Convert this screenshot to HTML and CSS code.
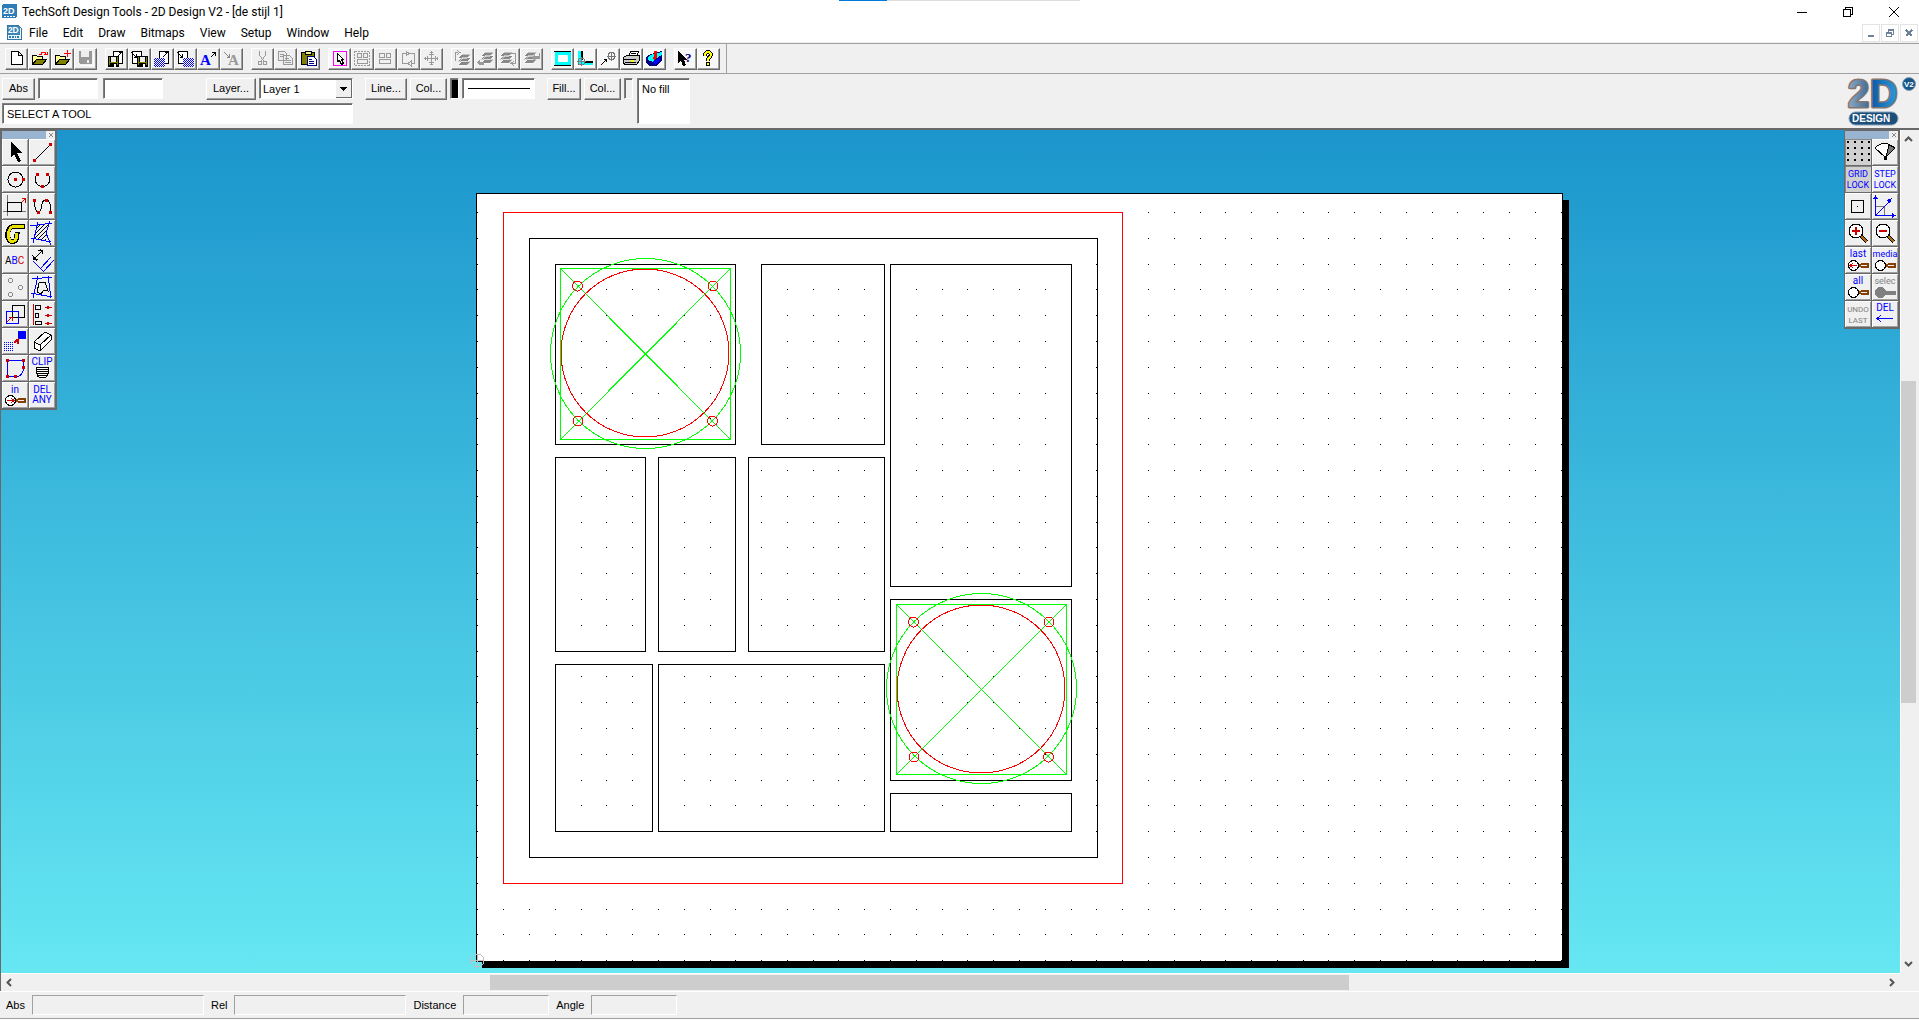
FILE: index.html
```html
<!DOCTYPE html>
<html lang="en">
<head>
<meta charset="utf-8">
<title>TechSoft Design Tools - 2D Design V2 - [de stijl 1]</title>
<link rel="stylesheet" href="styles.css">
</head>
<body>
<svg class="defs" aria-hidden="true">
  <defs>
    <pattern id="dither" width="2" height="2" patternUnits="userSpaceOnUse"><rect width="2" height="2" fill="#fff"/><path d="M0 0h1v1H0zM1 1h1v1H1z" fill="#00f"/></pattern>
    <pattern id="dotfill" width="2" height="2" patternUnits="userSpaceOnUse"><path d="M0 0h1v1H0z" fill="#00f"/></pattern>
    <pattern id="hatch" width="4" height="4" patternUnits="userSpaceOnUse"><path d="M-1 5 5-1M-1 1 1-1M3 5 5 3" stroke="#000" fill="none"/></pattern>
    <linearGradient id="steel" x1="0" x2="1"><stop offset="0" stop-color="#8fa9c0"/><stop offset="1" stop-color="#3f6c96"/></linearGradient>
    <linearGradient id="azure" x1="0" x2="1"><stop offset="0" stop-color="#0a58a0"/><stop offset="1" stop-color="#2a9ae0"/></linearGradient>
    <symbol id="disk" viewBox="0 0 12 12"><path d="M0 0h12v12H1L0 11z" fill="#000"/><path d="M1 1h1v9H1zM10 1h1v9h-1zM2 7h8v1H2z" fill="#808000"/><path d="M3 1h6v5H3z" fill="#efefef"/><path d="M7 9h2v3H7z" fill="#fff"/></symbol>
    <symbol id="lens" viewBox="0 0 26 26"><circle cx="8.500" cy="18.500" r="5" fill="#fff" stroke="#000"/><path d="M14 17h2v-1h7l1 1v3l-1 1h-7v-1h-2z" fill="#843f00"/><path d="M16 18h6" stroke="#efefef"/></symbol>
    <symbol id="glass" viewBox="0 0 26 26"><path d="M16 16l6 6" stroke="#000" stroke-width="4"/><path d="M16 16l6 6" stroke="#b06a10" stroke-width="2"/><circle cx="11" cy="11" r="7" fill="#fff" stroke="#000"/></symbol>
    <symbol id="stack" viewBox="0 0 14 14"><path d="M5 1h9l-4 4H1zM5 4.500h9l-4 4H1zM5 8h9l-4 4H1z" fill="#888" stroke="#fff" stroke-width=".5"/></symbol>
  </defs>
</svg>

<div class="app">
  <header class="titlebar">
    <svg class="appicon" viewBox="0 0 16 16"><rect width="15" height="14" rx="2" fill="#2c7cb8"/><text x="1" y="10" class="mini">2D</text><path d="M2 12h11" stroke="#fff" stroke-dasharray="2 1"/></svg>
    <h1>TechSoft Design Tools - 2D Design V2 - [de stijl 1]</h1>
    <div class="wincontrols">
      <button aria-label="Minimise"><svg viewBox="0 0 12 12"><path d="M1 6.500h10" stroke="#000"/></svg></button>
      <button aria-label="Restore"><svg viewBox="0 0 12 12"><path d="M1.500 3.500h7v7h-7zM3.500 3V1.500h7v7H9" fill="none" stroke="#000"/></svg></button>
      <button aria-label="Close"><svg class="soft" viewBox="0 0 12 12"><path d="M1 1l10 10M11 1 1 11" stroke="#000"/></svg></button>
    </div>
    <div class="hint"></div>
  </header>
  <nav class="menubar">
    <svg class="docicon" viewBox="0 0 16 16"><path d="M.5.5h12l3 3v12H.5z" fill="#e8f4fb" stroke="#2c6c98"/><path d="M1 1h13v10H1z" fill="#3a86b8"/><text x="1" y="9" class="mini">2D</text><path d="M2 13h12" stroke="#2c7cb8" stroke-width="2" stroke-dasharray="2 1"/></svg>
    <a href="#">File</a><a href="#">Edit</a><a href="#">Draw</a><a href="#">Bitmaps</a><a href="#">View</a><a href="#">Setup</a><a href="#">Window</a><a href="#">Help</a>
    <div class="mdicontrols">
      <button aria-label="Minimise drawing"><svg viewBox="0 0 10 10"><path d="M2 7.500h6" stroke="#6d8299" stroke-width="2"/></svg></button>
      <button aria-label="Restore drawing"><svg viewBox="0 0 10 10"><path d="M1.500 5h5v3.500h-5zM3.500 4V2h5v4H7" fill="none" stroke="#6d8299"/><path d="M1 4.500h6M3 1.500h6" stroke="#6d8299" stroke-width="2"/></svg></button>
      <button aria-label="Close drawing"><svg viewBox="0 0 10 10"><path d="M2 2l6 6M8 2 2 8" stroke="#6d8299" stroke-width="2"/></svg></button>
    </div>
  </nav>

  <div class="toolbar">
    <div class="icons">
      <div class="group">
        <button aria-label="New"><svg viewBox="0 0 23 22"><path d="M6.500 3.500h7l4 4v9h-11zM13.500 3.500v4h4" fill="#fff" stroke="#000"/></svg></button>
        <button aria-label="Open"><svg viewBox="0 0 23 22"><path d="M4.500 16.500v-9h4l1 1h5v3" fill="#ff9" stroke="#000"/><path d="M4.500 16.500l4-5h10l-4 5z" fill="#808000" stroke="#000"/><path d="M11 6.500h2v-2h4v2h2M16 6.500h3v-3" fill="none" stroke="red"/></svg></button>
        <button aria-label="Insert"><svg viewBox="0 0 23 22"><path d="M4.500 16.500v-9h4l1 1h5v3" fill="#ff9" stroke="#000"/><path d="M4.500 16.500l4-5h10l-4 5z" fill="#808000" stroke="#000"/><path d="M13 5.500h7M16.500 2v7" stroke="red"/></svg></button>
        <button aria-label="Save"><svg viewBox="0 0 23 22"><path d="M5 3h13v13H6l-1-1z" fill="#999"/><path d="M7 3h8v6H7zM13 12h2v3h-2z" fill="#eee"/><path d="M6 17.500h13V5" fill="none" stroke="#fff"/></svg></button>
      </div>
      <div class="group">
        <button aria-label="Export drawing"><svg viewBox="0 0 23 22"><path d="M8.500 3.500h9v12h-9z" fill="#fff" stroke="#000"/><use href="#disk" x="3" y="8" width="11" height="11"/><path d="M13 8l4-4M14 4.500h3v3" fill="none" stroke="#000"/></svg></button>
        <button aria-label="Import drawing"><svg viewBox="0 0 23 22"><path d="M4.500 3.500h9v12h-9z" fill="#fff" stroke="#000"/><use href="#disk" x="9" y="8" width="11" height="11"/><path d="M3 4l5 5M8.500 6v3.500h-3" fill="none" stroke="#000"/></svg></button>
        <button aria-label="Export bitmap"><svg viewBox="0 0 23 22"><path d="M8.500 3.500h9v12h-9z" fill="#fff" stroke="#000"/><path d="M3 10h11v9H3z" fill="url(#dither)"/><path d="M12 9l5-5M14 4.500h3v3" fill="none" stroke="#000"/></svg></button>
        <button aria-label="Import bitmap"><svg viewBox="0 0 23 22"><path d="M4.500 3.500h9v12h-9z" fill="#fff" stroke="#000"/><path d="M9 10h11v9H9z" fill="url(#dither)"/><path d="M3 4l5 5M8.500 6v3.500h-3" fill="none" stroke="#000"/></svg></button>
        <button aria-label="Export text"><svg viewBox="0 0 23 22"><text x="3" y="17" class="serifA">A</text><path d="M14 9l4-4M15 4.500h3v3" fill="none" stroke="#000"/></svg></button>
        <button aria-label="Import text"><svg viewBox="0 0 23 22"><text x="8" y="17" class="serifA off">A</text><path d="M4 4l5 5M9.500 6v3.500h-3" fill="none" stroke="#888"/></svg></button>
      </div>
      <div class="group">
        <button aria-label="Cut"><svg viewBox="0 0 23 22"><path d="M8.500 3v4l4 6M14.500 3v4l-4 6" fill="none" stroke="#999"/><circle cx="9" cy="15" r="2" fill="none" stroke="#999"/><circle cx="14" cy="15" r="2" fill="none" stroke="#999"/></svg></button>
        <button aria-label="Copy"><svg viewBox="0 0 23 22"><path d="M4.500 3.500h6l2 2v7h-8zM9.500 7.500h6l3 3v6h-9z" fill="#eee" stroke="#999"/><path d="M6 6.500h4M6 8.500h3M11 10.500h4M11 12.500h6M11 14.500h6" stroke="#999"/></svg></button>
        <button aria-label="Paste"><svg viewBox="0 0 23 22"><path d="M4.500 4.500h13v12h-13z" fill="#808000" stroke="#000"/><path d="M8 3h6v3H8z" fill="#ee9" stroke="#000"/><path d="M10.500 8.500h6l3 3v6h-9z" fill="#fff" stroke="#000080"/><path d="M12 11.500h3M12 13.500h5M12 15.500h5" stroke="#000080"/></svg></button>
      </div>
      <div class="group">
        <button class="lit" aria-label="Select"><svg viewBox="0 0 23 22"><path d="M5 3.500h13v14H5z" fill="#efefef" stroke="#f0f"/><path d="M9.500 5.500v8l2-1 2 4 2-1-2-4h2z" fill="#fff" stroke="#000"/></svg></button>
        <button aria-label="Select all"><svg viewBox="0 0 23 22"><path d="M3.500 3.500h15v14h-15z" fill="none" stroke="#999" stroke-dasharray="2 1"/><path d="M6.500 5.500h4v4h-4zM12.500 5.500h4v4h-4zM6.500 11.500h10v4h-10z" fill="none" stroke="#999"/></svg></button>
        <button aria-label="Group"><svg viewBox="0 0 23 22"><path d="M5.500 5.500h5v4h-5zM12.500 5.500h4v4h-4zM5.500 11.500h11v4h-11z" fill="none" stroke="#999"/></svg></button>
        <button aria-label="Rotate"><svg viewBox="0 0 23 22"><path d="M10 5.500H5.500v10H11M12 5.500h5.500v10H14M9 3v5l3-2.500zM14 13v5l-3-2.500z" fill="none" stroke="#999"/></svg></button>
        <button aria-label="Move"><svg viewBox="0 0 23 22"><path d="M4 10.500h14M11.500 3v14M9 6.500h5M9 14.500h5M7.500 8v5M15.500 8v5M5.500 9v3M17.500 9v3M10 4.500h3M10 16.500h3" stroke="#999"/></svg></button>
      </div>
      <div class="group">
        <button aria-label="Bring to front"><svg viewBox="0 0 23 22"><use href="#stack" x="6" y="5" width="14" height="14"/><path d="M4.500 13V4.500H7M6 2.500l3 2-3 2" fill="none" stroke="#999"/></svg></button>
        <button aria-label="Bring forward"><svg viewBox="0 0 23 22"><use href="#stack" x="6" y="3" width="14" height="14"/><path d="M3 15l3-4v3h4v3H6z" fill="#999"/></svg></button>
        <button aria-label="Send to back"><svg viewBox="0 0 23 22"><use href="#stack" x="2" y="3" width="14" height="14"/><path d="M14 5.500h4.500v10H15M17 13l-3 2.500 3 2" fill="none" stroke="#999"/></svg></button>
        <button aria-label="Send backward"><svg viewBox="0 0 23 22"><use href="#stack" x="3" y="3" width="14" height="14"/><path d="M12 9l3-3v2h4V5h1v6h-5v2z" fill="#999"/></svg></button>
      </div>
      <div class="group">
        <button class="lit" aria-label="Page view"><svg viewBox="0 0 23 22"><path d="M5 5.500h13v10H5z" fill="#fff" stroke="#0ff" stroke-width="3"/><path d="M3 3.500h17M3 17.500h17" stroke="#000"/></svg></button>
        <button class="lit" aria-label="Rulers"><svg viewBox="0 0 23 22"><path d="M4 3h4v14H4zM8 13h11v4H8z" fill="#0ff"/><path d="M7.500 3v9M10 13.500h9" stroke="#000" stroke-width="2"/><circle cx="7.500" cy="13.500" r="3.500" fill="none" stroke="#777"/><path d="M3 13.500h9M7.500 9v9" stroke="#777"/></svg></button>
        <button class="lit" aria-label="Origin"><svg viewBox="0 0 23 22"><circle cx="14.500" cy="8" r="3.500" fill="none" stroke="#777"/><path d="M10 8h9M14.500 3.500v9" stroke="#777"/><path d="M4 17l5-5" stroke="#000"/><path d="M6 11h4v4z"/></svg></button>
        <button class="lit" aria-label="Print"><svg viewBox="0 0 23 22"><path d="M8.500 8.500l2-5h8l-2 5z" fill="#fff" stroke="#000"/><path d="M3.500 9.500l3-2h13v5l-3 4H4.500l-1-2z" fill="#ccc" stroke="#000"/><path d="M4 11.500h12M5 14.500h11M11 5.500h5M10 7.500h5" stroke="#000"/><path d="M11 12h3v2h-3z" fill="#ff0"/></svg></button>
        <button class="lit" aria-label="Machine output"><svg viewBox="0 0 23 22"><path d="M3 9l5-3 11-3v9l-5 6H6l-3-3z" fill="#000080"/><path d="M5 9l5-3 9-2v3l-7 4-2 3-5-2z" fill="#0ff"/><path d="M11 3h3v6l-3 3-2-2 2-2z" fill="red"/><path d="M9 14l8-4v3l-5 4z" fill="#00f"/></svg></button>
      </div>
      <div class="group">
        <button class="lit" aria-label="Context help"><svg viewBox="0 0 23 22"><path d="M4 3v12l3-2 2 5 3-1-2-5h3z"/><text x="11" y="14" class="q">?</text></svg></button>
        <button class="lit" aria-label="Help"><svg viewBox="0 0 23 22"><path d="M8 8V6q3-4 6 0 0 2-2 4-1 0-1 2.500" fill="none" stroke="#000" stroke-width="4"/><path d="M8 8V6q3-4 6 0 0 2-2 4-1 0-1 2.500" fill="none" stroke="#ff0" stroke-width="2"/><path d="M9.500 14.500h3v3h-3z" fill="#ff0" stroke="#000"/></svg></button>
      </div>
    </div>
  </div>

  <div class="options">
    <div class="coords">
      <div class="row">
        <button class="push abs">Abs</button>
        <input class="sunk num" aria-label="X coordinate"><input class="sunk num" aria-label="Y coordinate">
        <button class="push layer">Layer...</button>
        <select class="sunk" aria-label="Layer"><option>Layer 1</option></select>
      </div>
      <input class="sunk prompt" aria-label="Prompt" value="SELECT A TOOL" readonly>
    </div>
    <div class="row line">
      <button class="push w42">Line...</button><button class="push">Col...</button>
      <span class="sunk swatch black"></span><span class="sunk sample"></span>
    </div>
    <div class="row fill">
      <button class="push w34">Fill...</button><button class="push">Col...</button>
      <span class="sunk swatch"></span><span class="sunk nofill">No fill</span>
    </div>
    <svg class="logo" viewBox="0 0 72 52" aria-label="2D Design V2">
      <g font-family="Liberation Sans, sans-serif" font-weight="bold">
        <g font-size="38" stroke="#86746e" stroke-width="3" paint-order="stroke" stroke-linejoin="round"><text x="2" y="31" fill="url(#steel)">2</text><text x="24" y="31" fill="url(#azure)">D</text></g>
        <rect x="3" y="36" width="49" height="13" rx="6.500" fill="#1d4f7c" stroke="#8aa0b4"/>
        <text x="6" y="46" font-size="10" fill="#fff">DESIGN</text>
        <circle cx="63" cy="8" r="6.500" fill="#14558a" stroke="#8aa0b4"/><text x="58" y="11" font-size="8" fill="#fff">V2</text>
      </g>
    </svg>
  </div>

  <main class="workspace">
    <div class="canvas">
      <svg class="sheet" width="1094" height="776" viewBox="476 193 1094 776">
        <path d="M482 200h1087v768H482z"/>
        <path d="M476.500 193.500h1086v768h-1086z" fill="#fff" stroke="#000"/>
        <path id="dots"/>
        <g fill="none">
          <path stroke="#f00" d="M503.500 212.500h619v671h-619z"/>
          <path stroke="#000" d="M529.500 238.500h568v619h-568zM555.500 264.500h180v180h-180zM761.500 264.500h123v180h-123zM890.500 264.500h181v322h-181zM555.500 457.500h90v194h-90zM658.500 457.500h77v194h-77zM748.500 457.500h136v194h-136zM555.500 664.500h97v167h-97zM658.500 664.500h226v167h-226zM890.500 599.500h181v181h-181zM890.500 793.500h181v38h-181z"/>
          <g stroke="#0f0"><path d="M560.500 268.500h170v171h-170zM560.500 268.500l170 171M730.500 268.500l-170 171"/><circle cx="645.500" cy="353.500" r="95"/><path d="M896.500 604.500h170v170h-170zM896.500 604.500l170 170M1066.500 604.500l-170 170"/><circle cx="981.500" cy="688.500" r="95"/></g>
          <g stroke="#f00"><circle cx="645" cy="353" r="84"/><circle cx="577.500" cy="286" r="5"/><circle cx="713" cy="286" r="5"/><circle cx="578" cy="421" r="5"/><circle cx="712.500" cy="421" r="5"/>
          <circle cx="981" cy="689" r="84"/><circle cx="913.500" cy="622" r="5"/><circle cx="1049" cy="622" r="5"/><circle cx="914" cy="757" r="5"/><circle cx="1048.500" cy="757" r="5"/></g>
          <g stroke="#c0c0c0"><circle cx="477.500" cy="960.500" r="6.500"/><path d="M471 960.500h13M477.500 954v13"/></g>
        </g>
      </svg>

      <section class="palette left" aria-label="Drawing tools">
        <div class="grip"><button aria-label="Close tools"><svg viewBox="0 0 8 8"><path d="M1 1l6 6M7 1 1 7" stroke="#666"/></svg></button></div>
        <div class="tools">
          <button aria-label="Select"><svg viewBox="0 0 26 26"><path d="M9 3v15l3-3 4 8 3-1-4-8h5z"/></svg></button>
          <button aria-label="Line"><svg viewBox="0 0 26 26"><path d="M6 21 21 6" stroke="#000"/><path d="M4 20h3v3H4zM20 4h3v3h-3z" fill="#c00"/></svg></button>
          <button aria-label="Circle"><svg viewBox="0 0 26 26"><circle cx="13.500" cy="13.500" r="7.500" fill="none" stroke="#000"/><path d="M12 12h3v3h-3zM20 12h3v3h-3z" fill="#c00"/></svg></button>
          <button aria-label="Arc"><svg viewBox="0 0 26 26"><path d="M9 8a7 7 0 0 0-3 5 7.500 7.500 0 0 0 15 0 7 7 0 0 0-3-5" fill="none" stroke="#000"/><path d="M7 7h3v3H7zM17 7h3v3h-3zM12 19h3v3h-3z" fill="#c00"/></svg></button>
          <button aria-label="Rectangle"><svg viewBox="0 0 26 26"><path d="M5.500 2v21M1 18.500h23" stroke="#777"/><path d="M5.500 9.500h14v9h-14z" fill="none" stroke="#000" stroke-width="1"/><path d="M20 9l3-3M19.500 5.500h4v4" fill="none" stroke="#c00"/></svg></button>
          <button aria-label="Curve"><svg viewBox="0 0 26 26"><path d="M5.500 8c0 8 1 11 4 11 5 0 1-12 7-12 5 0 5 6 5 12" fill="none" stroke="#000"/><path d="M4 6h3v3H4zM8 18h3v3H8zM16 6h3v3h-3zM20 18h3v3h-3z" fill="#c00"/></svg></button>
          <button aria-label="Thick line"><svg viewBox="0 0 26 26"><path d="M23 6.500H12c-8 0-8 15-2 15 6 0 5-6 5-10" fill="none" stroke="#000" stroke-width="5"/><path d="M22 6.500H12c-7 0-7 15-2 15 5 0 5-6 5-9" fill="none" stroke="#e8e000" stroke-width="3"/></svg></button>
          <button aria-label="Hatch"><svg viewBox="0 0 26 26"><path d="M8 5l12-1-3 17-11-2z" fill="url(#hatch)"/><path d="M1 6l22-3M9 2 4 23M21 1l-4 12 5 12M2 18l20 4" fill="none" stroke="#00f"/></svg></button>
          <button aria-label="Text"><svg viewBox="0 0 26 26"><text x="3" y="17" class="t10" fill="#000"><tspan fill="#000">A</tspan><tspan fill="#00f">B</tspan><tspan fill="#c00">C</tspan></text></svg></button>
          <button aria-label="Dimension"><svg viewBox="0 0 26 26"><path d="M5 12l9-9M3 8l5 6M11 2l3 3M4.500 12.500v-4M5 12.500h4M13.500 3v4M13 3.500H9" stroke="#000" fill="none"/><path d="M11 22 22 10M14 25 25 13M4 14l11 11" fill="none" stroke="#00f"/></svg></button>
          <button aria-label="Points"><svg viewBox="0 0 26 26"><g fill="none" stroke="#888"><circle cx="8.500" cy="6.500" r="2"/><circle cx="18.500" cy="13.500" r="2"/><circle cx="8.500" cy="20.500" r="2"/></g></svg></button>
          <button aria-label="Offset"><svg viewBox="0 0 26 26"><path d="M3 5l20-2M9 2 4 24M19 2l3 22M2 19l21 4" stroke="#00f" fill="none"/><path d="M10 9l6-1 3 9-4-1-3 4-4-2z" fill="none" stroke="#000"/></svg></button>
          <button aria-label="Scale"><svg viewBox="0 0 26 26"><path d="M10.500 4.500h12v12h-12z" fill="none" stroke="#000"/><path d="M4.500 10.500h12v12h-12z" fill="none" stroke="#00f"/><path d="M5 21l5-5M7 16.500h3.500V20" fill="none" stroke="#c00"/></svg></button>
          <button aria-label="Align"><svg viewBox="0 0 26 26"><path d="M4.500 3v21" stroke="#c00"/><path d="M6.500 4.500h5v4h-5zM6.500 12.500h3v4h-3zM6.500 20.500h6v3h-6z" fill="none" stroke="#000"/><path d="M17 6.500h6M17 14.500h6M17 22.500h6" stroke="#c00"/><path d="M16 6.500l4-2v4zM16 14.500l4-2v4zM16 22.500l4-2v4z" fill="#c00"/></svg></button>
          <button aria-label="Transform"><svg viewBox="0 0 26 26"><path d="M16 3h8v8h-8z" fill="#00f"/><path d="M2 14h10v10H2z" fill="url(#dotfill)"/><path d="M12 14l4-3v4h-1v-2l-2 2z" fill="#c00" stroke="#c00"/></svg></button>
          <button aria-label="3D"><svg viewBox="0 0 26 26"><path d="M5 14 16 4l6 3v5L11 23l-6-3zM5 14l6 3 11-10M11 17v6" fill="#fff" stroke="#000"/></svg></button>
          <button aria-label="Edit path"><svg viewBox="0 0 26 26"><path d="M5.500 5.500h16v7c0 6-3 9-8 9h-8z" fill="none" stroke="#00f"/><path d="M4 4h3v3H4zM20 4h3v3h-3zM20 11h3v3h-3zM12 20h3v3h-3zM4 20h3v3H4z" fill="#c00"/></svg></button>
          <button aria-label="Clip"><svg viewBox="0 0 26 26"><text x="13" y="10" class="t10">CLIP</text><path d="M7.500 12.500h12v6l-3 4h-5c-4 0-4-5-4-10z" fill="#fff" stroke="#000"/><path d="M8 14.500h12M8 16.500h12M8 18.500h11M9 20.500h9" stroke="#000"/></svg></button>
          <button aria-label="Zoom in"><svg viewBox="0 0 26 26"><text x="13" y="11" class="t10">in</text><use href="#lens"/><path d="M5 18.500h7M9 16l3 2.500-3 2.500" fill="none" stroke="#c00"/></svg></button>
          <button aria-label="Delete any"><svg viewBox="0 0 26 26"><text x="13" y="11" class="t10">DEL</text><text x="13" y="21" class="t10">ANY</text></svg></button>
        </div>
      </section>

      <section class="palette right" aria-label="View tools">
        <div class="grip"><button aria-label="Close view tools"><svg viewBox="0 0 8 8"><path d="M1 1l6 6M7 1 1 7" stroke="#666"/></svg></button></div>
        <div class="tools">
          <button class="down" aria-label="Show grid"><svg viewBox="0 0 26 26"><path d="M2 3h24M2 9h24M2 15h24M2 21h24" stroke="#000" stroke-width="2" stroke-dasharray="2 5"/></svg></button>
          <button aria-label="Step lock type"><svg viewBox="0 0 26 26"><path d="M3 9q9-9 20 0L13 18z" fill="#fff" stroke="#000"/><path d="M17 6l6 3-9 9z" fill="#777" stroke="#000"/><path d="M12 17h3v4h-3z"/></svg></button>
          <button class="down" aria-label="Grid lock"><svg viewBox="0 0 26 26"><text x="13" y="11" class="t9">GRID</text><text x="13" y="22" class="t9">LOCK</text></svg></button>
          <button aria-label="Step lock"><svg viewBox="0 0 26 26"><text x="13" y="11" class="t9">STEP</text><text x="13" y="22" class="t9">LOCK</text></svg></button>
          <button aria-label="Attach"><svg viewBox="0 0 26 26"><path d="M6.500 7.500h12v12h-12z" fill="none" stroke="#000"/><path d="M12 13h1v1h-1z"/></svg></button>
          <button aria-label="Axes"><svg viewBox="0 0 26 26"><path d="M4 13.500h8.500V23" fill="none" stroke="#777"/><path d="M3.500 3v20M3 22.500h20M4 22 18 8" stroke="#00f" fill="none"/><path d="M1 6l2.500-4L6 6zM20 20l4 2.500-4 2.500zM15 7l5-2-2 6z" fill="#00f"/></svg></button>
          <button aria-label="Magnify"><svg viewBox="0 0 26 26"><use href="#glass"/><path d="M7 11h8M11 7v8" stroke="#c00" stroke-width="2"/></svg></button>
          <button aria-label="Reduce"><svg viewBox="0 0 26 26"><use href="#glass"/><path d="M7 11h8" stroke="#c00" stroke-width="2"/></svg></button>
          <button aria-label="Zoom last"><svg viewBox="0 0 26 26"><text x="13" y="10" class="t10">last</text><use href="#lens"/><path d="M5 18.500h7M8 16l-3 2.500 3 2.500" fill="none" stroke="#c00"/></svg></button>
          <button aria-label="Zoom media"><svg viewBox="0 0 26 26"><text x="13" y="10" class="t9">media</text><use href="#lens"/></svg></button>
          <button aria-label="Zoom all"><svg viewBox="0 0 26 26"><text x="13" y="10" class="t10">all</text><use href="#lens"/></svg></button>
          <button aria-label="Zoom selected"><svg viewBox="0 0 26 26"><text x="13" y="10" class="t9 off">selec</text><circle cx="8.500" cy="18.500" r="5.500" fill="#808080"/><path d="M14 18.500h10" stroke="#808080" stroke-width="4"/></svg></button>
          <button aria-label="Undo last"><svg viewBox="0 0 26 26"><text x="13" y="11" class="t8 off">UNDO</text><text x="13" y="22" class="t8 off">LAST</text></svg></button>
          <button aria-label="Delete last"><svg viewBox="0 0 26 26"><text x="13" y="10" class="t10">DEL</text><path d="M5 17.500h16M9 14l-4 3.500L9 21" fill="none" stroke="#00f"/></svg></button>
        </div>
      </section>
    </div>
    <div class="vscroll"><svg viewBox="0 0 9 9"><path d="M1 6l3.500-3.500L8 6" fill="none" stroke="#555" stroke-width="2"/></svg><div class="track"><i class="before"></i><i class="thumb"></i><i class="after"></i></div><svg viewBox="0 0 9 9"><path d="M1 3l3.500 3.500L8 3" fill="none" stroke="#555" stroke-width="2"/></svg></div>
    <div class="hscroll"><svg viewBox="0 0 9 9"><path d="M6 1 2.500 4.500 6 8" fill="none" stroke="#555" stroke-width="2"/></svg><div class="track"><i class="before"></i><i class="thumb"></i><i class="after"></i></div><svg viewBox="0 0 9 9"><path d="M3 1l3.500 3.500L3 8" fill="none" stroke="#555" stroke-width="2"/></svg></div>
  </main>

  <footer class="status">
    <label for="s-abs">Abs</label><input id="s-abs" class="wide" readonly>
    <label for="s-rel">Rel</label><input id="s-rel" class="wide" readonly>
    <label for="s-dist">Distance</label><input id="s-dist" readonly>
    <label for="s-ang">Angle</label><input id="s-ang" readonly>
  </footer>
</div>
<script src="grid.js"></script>
</body>
</html>
```
FILE: styles.css
```css
* { box-sizing: border-box; }
body {
  margin: 0;
  font: 11px/14px "Liberation Sans", Arial, sans-serif;
  color: #000;
  background: #f0f0f0;
}
svg { display: block; shape-rendering: crispEdges; }
button, input, select { font: inherit; color: inherit; border-radius: 0; margin: 0; padding: 0; }
button { border: 0; background: none; }
.defs { position: absolute; width: 0; height: 0; }
.soft { shape-rendering: auto; }
.app { display: flex; flex-direction: column; height: 100vh; overflow: hidden; }

/* title and menu */
.titlebar { position: relative; display: flex; align-items: center; height: 23px; padding: 0 19px 0 2px; background: #fff; }
.titlebar h1 { margin: 0; font: 12px/16px Roboto, "Noto Sans", sans-serif; }
.appicon { width: 16px; height: 16px; margin-right: 4px; }
.mini { font: bold 9px "Liberation Sans", sans-serif; fill: #fff; }
.hint { position: absolute; top: 0; left: 839px; width: 241px; height: 1px; background: linear-gradient(90deg, #0078d7 48px, #ddd 48px); }
.wincontrols { display: flex; gap: 34px; margin-left: auto; }
.wincontrols svg { width: 12px; height: 12px; }
.menubar { display: flex; align-items: center; gap: 15px; height: 20px; padding: 0 1px 0 7px; background: #fff; font: 12px/16px Roboto, "Noto Sans", sans-serif; border-bottom: 1px solid #eee; }
.menubar a { color: #000; text-decoration: none; }
.docicon { width: 15px; height: 15px; margin-right: -8px; }
.mdicontrols { display: flex; gap: 1px; margin-left: auto; }
.mdicontrols button { display: grid; place-items: center; width: 18px; height: 18px; border: 1px solid #e4e4e4; }
.mdicontrols svg { width: 10px; height: 10px; }

/* icon toolbar */
.toolbar { height: 30px; background: #f0f0f0; border-top: 1px solid #a0a0a0; }
.icons { display: inline-flex; gap: 8px; height: 29px; padding: 4px 6px 3px 5px; border-right: 1px solid #a0a0a0; }
.group { display: flex; }
.group button { width: 23px; height: 22px; border: 1px solid; border-color: #fff #696969 #696969 #fff; box-shadow: inset -1px -1px #a0a0a0; }
.group button.lit { background: #f8f8f8; }
.group svg { width: 23px; height: 22px; margin: -1px; }
.serifA { font: bold 15px "Liberation Serif", serif; fill: #00f; }
.serifA.off { fill: #999; }
.q { font: bold 13px "Liberation Serif", serif; fill: #000080; }

/* drawing options */
.options { display: flex; align-items: flex-start; height: 57px; padding: 4px 0 0 2px; border-top: 1px solid #a0a0a0; border-bottom: 2px solid #696969; }
.row { display: flex; align-items: flex-start; gap: 3px; }
.coords { display: flex; flex-direction: column; gap: 3px; width: 351px; margin-right: 12px; }
.push { width: 37px; height: 22px; border: 1px solid; border-color: #fff #696969 #696969 #fff; box-shadow: inset -1px -1px #a0a0a0; padding-bottom: 2px; white-space: nowrap; }
.push.abs { width: 33px; }
.push.layer { width: 50px; margin-left: auto; }
.push.w42 { width: 42px; }
.push.w34 { width: 34px; }
.sunk { height: 21px; border: 1px solid; border-color: #808080 #fff #fff #808080; box-shadow: inset 1px 1px #696969; background: #fff; outline: 0; }
.num { width: 60px; }
.num + .num { margin-left: 2px; }
select.sunk {
  width: 94px; padding-left: 3px; appearance: none;
  background:
    linear-gradient(#000, #000) 80px 8px / 7px 1px no-repeat,
    linear-gradient(#000, #000) 81px 9px / 5px 1px no-repeat,
    linear-gradient(#000, #000) 82px 10px / 3px 1px no-repeat,
    linear-gradient(#000, #000) 83px 11px / 1px 1px no-repeat,
    linear-gradient(#696969, #696969) 91px 0 / 1px 19px no-repeat,
    linear-gradient(#696969, #696969) 76px 18px / 16px 1px no-repeat,
    linear-gradient(90deg, #fff 76px, #efefef 76px);
}
.prompt { width: 351px; padding-left: 4px; }
.line { margin-right: 12px; }
.swatch { width: 9px; background: #f0f0f0; }
.swatch.black { background: #000; }
.sample { width: 73px; background: linear-gradient(#000, #000) center / 62px 1px no-repeat #fff; }
.nofill { width: 53px; height: 46px; margin-left: 1px; padding: 3px 4px; }
.logo { width: 72px; height: 52px; margin: -2px 1px 0 auto; overflow: visible; shape-rendering: auto; }

/* workspace */
.workspace { flex: 1; display: grid; grid-template: minmax(0, 1fr) 18px / minmax(0, 1fr) 19px; min-height: 0; border-left: 1px solid #696969; }
.canvas { position: relative; overflow: hidden; background: linear-gradient(#1b95cc, #66e7f2); }
.sheet { position: absolute; left: 475px; top: 63px; overflow: visible; }
.palette { position: absolute; top: 0; width: 56px; padding: 1px 2px 2px 1px; background: #696969; }
.palette.left { left: 0; }
.palette.right { right: 0; }
.grip { display: flex; justify-content: flex-end; height: 8px; background: #99b4d1; }
.grip button { display: grid; place-items: center; width: 9px; background: #f0f0f0; }
.grip svg { width: 6px; height: 6px; }
.tools { display: grid; grid-template-columns: 1fr 1fr; gap: 1px; }
.tools button { height: 26px; background: #f0f0f0; box-shadow: inset 1px 1px #fff, inset -1px -1px #a0a0a0; }
.tools button.down { background: #d0d0d0; box-shadow: inset 1px 1px #888; }
.tools svg { width: 26px; height: 26px; }
.t8, .t9, .t10 { fill: #00f; text-anchor: middle; font-family: Roboto, sans-serif; }
.t8 { font-size: 8px; }
.t9 { font-size: 9px; }
.t10 { font-size: 10px; }
text.t10[x="3"] { text-anchor: start; }
.t8.off, .t9.off { fill: #808080; }

/* scroll bars and status */
.vscroll, .hscroll { display: flex; align-items: center; justify-content: space-between; background: #f0f0f0; }
.vscroll { flex-direction: column; padding: 5px 3px 5px 0; border-left: 1px solid #fff; }
.hscroll { padding: 0 4px 1px; border-top: 1px solid #fff; }
.vscroll svg, .hscroll svg { width: 9px; height: 9px; shape-rendering: auto; }
.track { flex: 1; display: flex; }
.vscroll .track { flex-direction: column; width: 15px; }
.hscroll .track { height: 15px; margin: 0 3px; }
.thumb { background: #cdcdcd; }
.vscroll .before { flex: 236; } .vscroll .thumb { flex: 322; } .vscroll .after { flex: 255; }
.hscroll .before { flex: 473; } .hscroll .thumb { flex: 859; } .hscroll .after { flex: 535; }
.status { display: flex; align-items: center; gap: 7px; height: 29px; padding: 0 6px 3px; border-top: 1px solid #fff; box-shadow: inset 0 -1px #fff, inset 0 -2px #a0a0a0; }
.status input { width: 86px; height: 20px; border: 1px solid; border-color: #a0a0a0 #fff #fff #a0a0a0; background: #f0f0f0; }
.status input.wide { width: 172px; }
```
FILE: grid.js
```js
// Lock grid: one pixel per 10 mm, counted from the sheet's lower left corner.
const STEP = 25.8;
let marks = "";
for (let row = 0; row <= 29; row++) {
  const y = Math.floor(960.7 - row * STEP);
  for (let col = 0; col <= 42; col++) {
    marks += `M${Math.floor(477.9 + col * 25.79)} ${y}h1v1h-1z`;
  }
}
document.getElementById("dots").setAttribute("d", marks);
```
